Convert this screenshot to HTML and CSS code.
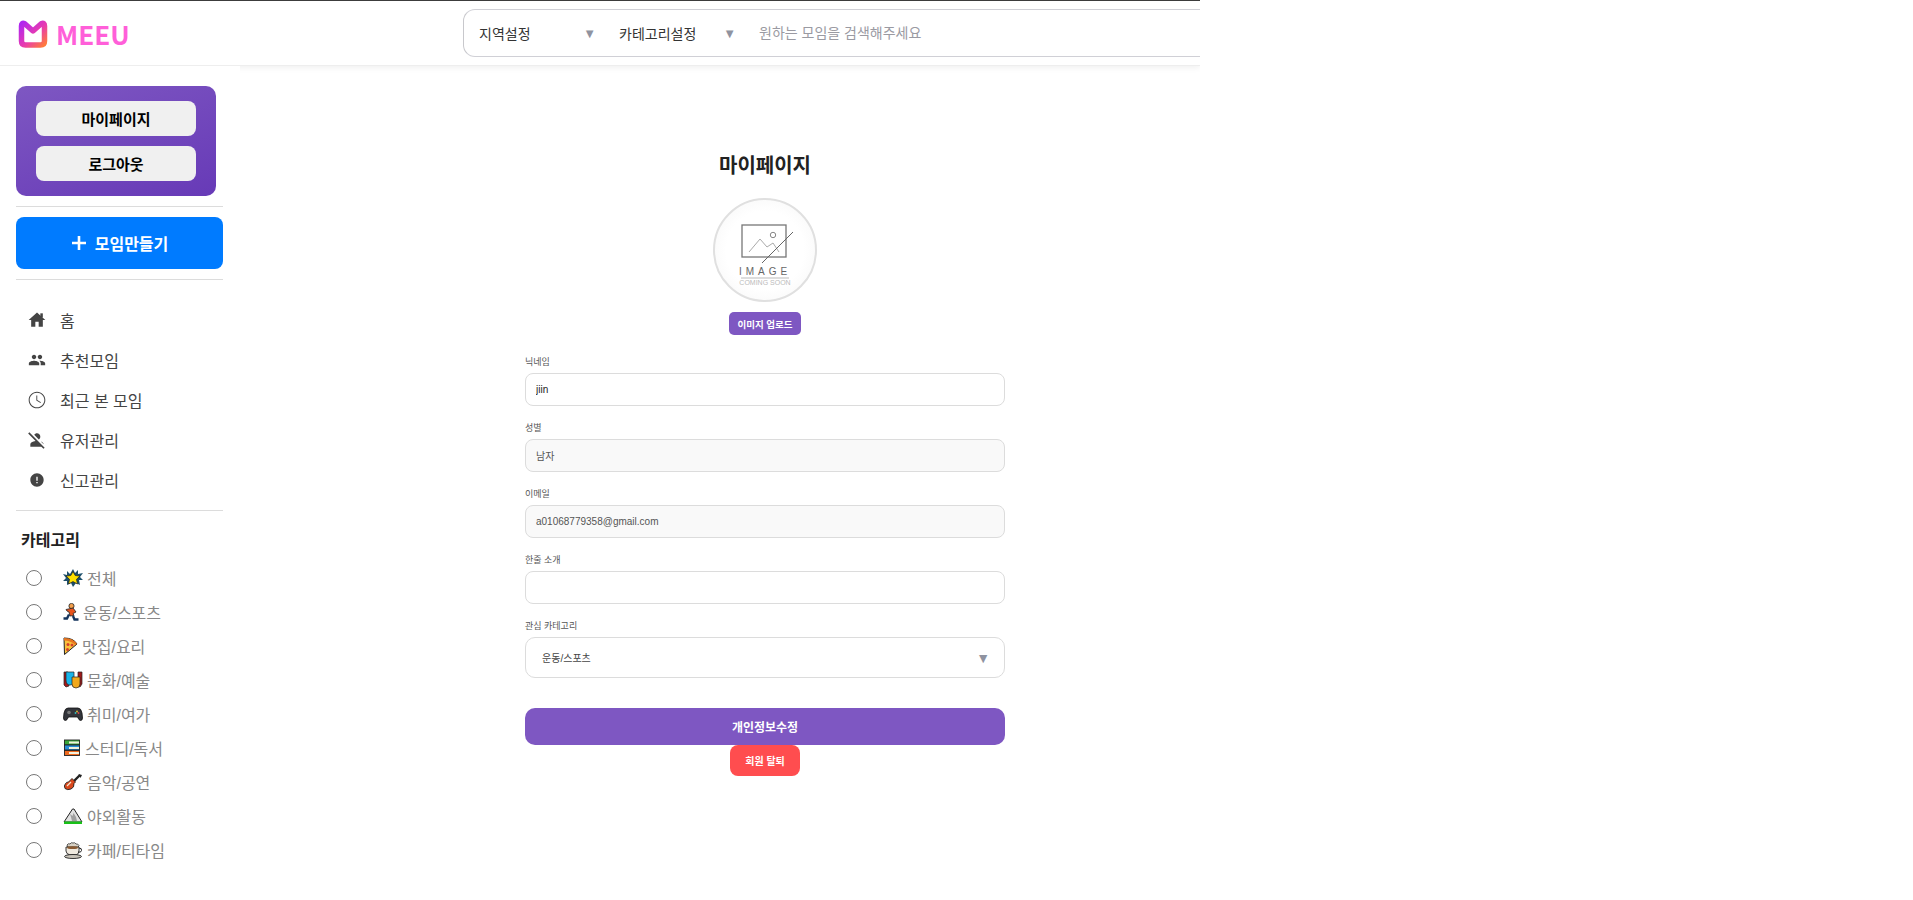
FILE: index.html
```html
<!DOCTYPE html>
<html lang="ko">
<head>
<meta charset="utf-8">
<title>MEEU</title>
<link rel="stylesheet" href="styles.css">
</head>
<body>
<div class="page">
  <header class="topbar">
    <div class="logo">
      <svg class="logo-mark" width="30" height="28" viewBox="0 0 30 28">
        <defs>
          <linearGradient id="lg" x1="0" y1="0" x2="1" y2="1">
            <stop offset="0" stop-color="#b026f0"/><stop offset=".55" stop-color="#e83bb0"/><stop offset="1" stop-color="#ff7a3c"/>
          </linearGradient>
        </defs>
        <path d="M3.500 6V21Q3.500 25 7.500 25H22.500Q26.500 25 26.500 21V6Q26.500 2.500 23.500 3.500L15 11L6.500 3.500Q3.500 2.500 3.500 6Z" fill="none" stroke="url(#lg)" stroke-width="5.500" stroke-linejoin="round"/>
      </svg>
      <span class="logo-text">MEEU</span>
    </div>
    <div class="search">
      <span class="search-select region">지역설정<i class="tri">▼</i></span>
      <span class="search-select cat">카테고리설정<i class="tri">▼</i></span>
      <input class="search-input" type="text" placeholder="원하는 모임을 검색해주세요">
    </div>
  </header>
  <div class="body">
    <aside class="sidebar">
      <div class="profile-card">
        <button class="profile-btn">마이페이지</button>
        <button class="profile-btn">로그아웃</button>
      </div>
      <hr class="rule">
      <button class="create-btn"><svg width="16" height="16" viewBox="0 0 16 16"><path d="M8 1V15M1 8H15" stroke="#fff" stroke-width="2.600"/></svg>모임만들기</button>
      <hr class="rule">
      <nav class="nav">
        <a class="nav-item"><svg width="20" height="20" viewBox="0 0 24 24"><path d="M10 20v-6h4v6h5v-8h3L12 3 2 12h3v8z"/><path d="M16 4h3v5h-3z"/></svg>홈</a>
        <a class="nav-item"><svg width="20" height="20" viewBox="-1.500 -1.500 27 27"><path d="M16 11c1.660 0 2.990-1.340 2.990-3S17.660 5 16 5c-1.660 0-3 1.340-3 3s1.340 3 3 3zm-8 0c1.660 0 2.990-1.340 2.990-3S9.660 5 8 5C6.340 5 5 6.340 5 8s1.340 3 3 3zm0 2c-2.330 0-7 1.170-7 3.500V19h14v-2.500c0-2.330-4.670-3.500-7-3.500zm8 0c-.290 0-.620.020-.970.050 1.160.840 1.970 1.970 1.970 3.450V19h6v-2.500c0-2.330-4.670-3.500-7-3.500z"/></svg>추천모임</a>
        <a class="nav-item"><svg width="20" height="20" viewBox="0 0 24 24"><path d="M11.990 2C6.470 2 2 6.480 2 12s4.470 10 9.990 10C17.520 22 22 17.520 22 12S17.520 2 11.990 2zM12 20.800c-4.860 0-8.800-3.940-8.800-8.800S7.140 3.200 12 3.200s8.800 3.940 8.800 8.800-3.940 8.800-8.800 8.800zm.3-14.300h-1.100v6l5 3 .55-.9-4.450-2.650z"/></svg>최근 본 모임</a>
        <a class="nav-item"><svg width="20" height="20" viewBox="0 0 24 24"><path d="M8.650 5.820C9.360 4.720 10.600 4 12 4c2.210 0 4 1.790 4 4 0 1.400-.720 2.640-1.820 3.350L8.650 5.820zM20 17.170c-.020-1.100-.630-2.110-1.610-2.620-.540-.280-1.130-.540-1.770-.760L20 17.170zM21.190 21.190 2.810 2.810 1.390 4.220l8.890 8.890c-1.810.230-3.390.790-4.670 1.450C4.610 15.070 4 16.100 4 17.220V20h13.170l2.610 2.610 1.410-1.420z"/></svg>유저관리</a>
        <a class="nav-item"><svg width="20" height="20" viewBox="-3 -3 30 30"><path d="M12 2C6.480 2 2 6.480 2 12s4.480 10 10 10 10-4.480 10-10S17.520 2 12 2zm1 15h-2v-2h2v2zm0-4h-2V7h2v6z"/></svg>신고관리</a>
      </nav>
      <hr class="rule">
      <h3 class="cat-title">카테고리</h3>
      <ul class="cat-list">
        <li class="cat-item"><input class="radio" type="radio" name="c"><svg width="20" height="18" viewBox="0 0 20 18"><path d="M10 0l2 4 3-3 0 4 5-1-3 4 3 3-4 0 1 5-4-2-3 4-2-4-4 2 0-4-4 0 3-3-3-4 4 1 0-4 3 3z" fill="#1d4f6b"/><path d="M10 2.500l2.200 4 4.800.6-3.500 3.200 1 4.700-4.500-2.400-4.500 2.400 1-4.700L3 7.100l4.800-.6z" fill="#ffe100" stroke="#222" stroke-width=".7"/></svg>전체</li>
        <li class="cat-item"><input class="radio" type="radio" name="c"><svg width="16" height="18" viewBox="0 0 16 18"><circle cx="8.500" cy="3" r="2.600" fill="#f4a04c" stroke="#222" stroke-width=".8"/><path d="M3 6.500l7-1.500 3 4-3 1.500 1 2-4 .5-1-4-2-1z" fill="#e8541e" stroke="#222" stroke-width=".8"/><path d="M6 11.500L4 15.500H.5M10 13l1.500 3.500h4" fill="none" stroke="#14355e" stroke-width="2.400"/></svg>운동/스포츠</li>
        <li class="cat-item"><input class="radio" type="radio" name="c"><svg width="15" height="18" viewBox="0 0 15 18"><path d="M1 1Q10.500 1 14 7L1.500 17.500z" fill="#f9c23c" stroke="#222" stroke-width="1"/><path d="M1 1Q10.500 1 14 7l-1.800 1Q8 3.500 1 3.500z" fill="#e8741e"/><circle cx="5" cy="7.500" r="1.500" fill="#d6402a"/><circle cx="9" cy="8" r="1.500" fill="#d6402a"/><circle cx="4.500" cy="12.500" r="1.500" fill="#d6402a"/></svg>맛집/요리</li>
        <li class="cat-item"><input class="radio" type="radio" name="c"><svg width="20" height="18" viewBox="0 0 20 18"><path d="M1 1h4l1 14-3 1-2-2zM15 1h4v12l-2 3-2-1z" fill="#a11a1a" stroke="#222" stroke-width=".7"/><path d="M3 1h8v8q0 5-4 5T3 9z" fill="#19b4e8" stroke="#222" stroke-width=".7"/><path d="M9 6h8v7q0 4-4 4t-4-4z" fill="#f0a81c" stroke="#222" stroke-width=".7"/></svg>문화/예술</li>
        <li class="cat-item"><input class="radio" type="radio" name="c"><svg width="20" height="18" viewBox="0 0 20 18"><path d="M5 3h10q3 0 4 5l.5 5q0 2.500-2 2.500-1.500 0-3-3.500H5.500Q4 15.500 2.500 15.500q-2 0-2-2.500L1 8q1-5 4-5z" fill="#33353b" stroke="#111" stroke-width=".8"/><circle cx="6" cy="7.500" r="1.800" fill="#777"/><circle cx="14" cy="6.500" r=".9" fill="#e0c030"/><circle cx="15.500" cy="8" r=".9" fill="#d44"/><circle cx="12.500" cy="8" r=".9" fill="#3bb"/></svg>취미/여가</li>
        <li class="cat-item"><input class="radio" type="radio" name="c"><svg width="18" height="18" viewBox="0 0 18 18"><rect x="1.500" y="1" width="15" height="5" fill="#3aa83a" stroke="#222" stroke-width=".9"/><rect x="1.500" y="6" width="15" height="5" fill="#2a8fd8" stroke="#222" stroke-width=".9"/><rect x="1.500" y="11.500" width="15" height="5" fill="#ee6a1e" stroke="#222" stroke-width=".9"/><path d="M6 2.500h10v2H6zM6 8h10v2H6zM6 13h10v2H6z" fill="#f5f1dc"/></svg>스터디/독서</li>
        <li class="cat-item"><input class="radio" type="radio" name="c"><svg width="20" height="18" viewBox="0 0 20 18"><path d="M10 9l7-7" stroke="#222" stroke-width="2.400"/><path d="M15.500 1l3.500 1-1.500 3z" fill="#222"/><path d="M9 5.500l3.500 3.500-1.500 1.500q.5 4-3 5.500-3.500 1.500-6-.5-1.500-2.500.5-5 1-1.500 3-1.500z" fill="#d9481c" stroke="#222" stroke-width=".9"/><path d="M4 13l4-4" stroke="#f4e6d0" stroke-width="1.300"/></svg>음악/공연</li>
        <li class="cat-item"><input class="radio" type="radio" name="c"><svg width="20" height="18" viewBox="0 0 20 18"><path d="M1 15L9.500 2h1.500L19 15z" fill="#e2e2e2" stroke="#222" stroke-width="1"/><path d="M7 7l2.500 2 1-3 2.500 4 1 4H9l-1-4z" fill="#a0a0a0"/><rect x="1" y="14.500" width="18" height="2.500" fill="#18c018"/></svg>야외활동</li>
        <li class="cat-item"><input class="radio" type="radio" name="c"><svg width="20" height="18" viewBox="0 0 20 18"><path d="M4 4q1-2 3-1 1-2 3-1 2-1 3 1 2-.5 3 1.500l-1 2H5z" fill="#d8d2c6" stroke="#333" stroke-width=".8"/><path d="M3 6h13v4q0 3-3 4H7q-4-1-4-4z" fill="#efe9df" stroke="#222" stroke-width=".9"/><ellipse cx="9.500" cy="6.700" rx="5.500" ry="1.400" fill="#8a5a32"/><path d="M16 7q3 0 2.500 2.500T15 11" fill="none" stroke="#222"/><ellipse cx="10" cy="15.500" rx="8.500" ry="2" fill="#c9c4ba" stroke="#222" stroke-width=".9"/></svg>카페/티타임</li>
      </ul>
    </aside>
    <main class="main">
      <h2 class="title">마이페이지</h2>
      <div class="avatar">
        <svg width="84" height="84" viewBox="0 0 84 84">
          <rect x="19" y="17" width="44" height="32" fill="none" stroke="#777" stroke-width="1.300"/>
          <circle cx="50" cy="27" r="2.700" fill="none" stroke="#888"/>
          <path d="M26 44L37 31l7 8 6-4 6 9" fill="none" stroke="#aaa"/>
          <path d="M39 55L70 24" stroke="#666" stroke-width="1"/>
          <text class="av-big" x="42" y="67" text-anchor="middle">IMAGE</text>
          <path d="M18 70H66" stroke="#aaa" stroke-width=".8"/>
          <text class="av-small" x="42" y="77" text-anchor="middle">COMING SOON</text>
        </svg>
      </div>
      <button class="upload-btn">이미지 업로드</button>
      <form class="form">
        <label class="field"><span class="label">닉네임</span><input class="input" type="text" value="jiin"></label>
        <label class="field"><span class="label">성별</span><input class="input locked" type="text" value="남자" readonly></label>
        <label class="field"><span class="label">이메일</span><input class="input locked" type="text" value="a01068779358@gmail.com" readonly></label>
        <label class="field"><span class="label">한줄 소개</span><input class="input" type="text"></label>
        <label class="field"><span class="label">관심 카테고리</span><span class="select">운동/스포츠<i class="select-tri">▼</i></span></label>
        <button class="submit-btn" type="button">개인정보수정</button>
      </form>
      <button class="delete-btn">회원 탈퇴</button>
    </main>
  </div>
</div>
</body>
</html>
```
FILE: styles.css
```css
* { box-sizing: border-box; }
html, body { margin: 0; padding: 0; background: #fff; }
body { font-family: "Noto Sans CJK KR", "Noto Sans", sans-serif; color: #333; }
button { font-family: inherit; cursor: pointer; border: 0; }

.page { width: 1200px; height: 900px; overflow: hidden; border-top: 1px solid #3c3c3c; }

.topbar { height: 65px; display: flex; align-items: flex-start; border-bottom: 1px solid #eee; box-shadow: 0 2px 6px rgba(0,0,0,.06); position: relative; }
.logo { flex: none; width: 463px; height: 64px; display: flex; align-items: center; gap: 8px; padding: 1px 0 0 18px; }
.logo-mark { display: block; }
.logo-text { font-size: 26px; font-weight: 700; line-height: 1; color: #ff5fd9; }

.search { flex: none; width: 800px; height: 48px; margin-top: 8px; display: flex; align-items: center; border: 1px solid #d0d0d6; border-left-color: #c8c8cc; border-radius: 12px; font-size: 14px; color: #333; font-family: "Liberation Sans", "Noto Sans CJK KR", sans-serif; }
.search-select { display: flex; align-items: center; justify-content: space-between; flex: none; }
.region { width: 132px; padding-left: 15px; margin-right: 23px; }
.cat { width: 117px; margin-right: 23px; }
.tri { font-style: normal; font-size: 13px; color: #8f93a0; }
.search-input { flex: 1; border: 0; outline: 0; font: inherit; padding: 0; background: none; }
.search-input::placeholder { color: #9a9aa2; opacity: 1; }

.body { display: flex; }
.sidebar { width: 240px; flex: none; padding: 20px 17px 0 16px; background: #fff; position: relative; }
.rule { border: 0; border-top: 1px solid #dcdcdc; margin: 10px 0; }
.profile-card { width: 200px; height: 110px; border-radius: 10px; background: linear-gradient(160deg, #7e57c2, #673ab7); display: flex; flex-direction: column; align-items: center; justify-content: center; gap: 10px; }
.profile-btn { width: 160px; height: 35px; border-radius: 8px; background: #f0f0f0; color: #000; font-size: 15px; font-weight: 700; padding: 0; }
.create-btn { width: 100%; height: 52px; border-radius: 8px; background: #007bff; color: #fff; font-size: 16px; font-weight: 700; display: flex; align-items: center; justify-content: center; gap: 8px; padding: 0; }

.nav { display: flex; flex-direction: column; padding-top: 10px; margin-bottom: 0; }
.nav-item { height: 40px; display: flex; align-items: center; gap: 13px; padding-left: 11px; font-family: "Liberation Sans", "Noto Sans CJK KR", sans-serif; font-size: 16px; color: #444; }
.nav-item svg { fill: #444; flex: none; }

.cat-title { margin: 0; padding: 6px 5px 0; font-size: 16px; font-weight: 700; line-height: 24px; color: #222; }
.cat-list { list-style: none; margin: 10px 0 0; padding: 0 0 0 10px; }
.cat-item { height: 34px; display: flex; align-items: center; gap: 4px; font-family: "Liberation Sans", "Noto Sans CJK KR", sans-serif; font-size: 16px; color: #888; }
.cat-item svg { flex: none; }
.radio { appearance: none; width: 16px; height: 16px; margin: 0 17px 0 0; border: 1px solid #777; border-radius: 50%; background: #fff; flex: none; }

.main { flex: 0 0 480px; margin-left: 285px; display: flex; flex-direction: column; align-items: center; }
.title { margin: 84px 0 0; font-size: 20px; font-weight: 700; line-height: 29px; color: #222; }
.avatar { width: 104px; height: 104px; margin-top: 19px; border-radius: 50%; border: 2px solid #e0e0e0; background: radial-gradient(circle, #fff 55%, #f4f4f4); display: flex; align-items: center; justify-content: center; }
.av-big { font-family: "Liberation Sans", sans-serif; font-size: 10px; letter-spacing: 4px; fill: #666; }
.av-small { font-family: "Liberation Sans", sans-serif; font-size: 7px; fill: #bbb; }
.upload-btn { width: 72px; height: 23px; margin-top: 10px; padding: 0; border-radius: 5px; background: #7e57c2; color: #fff; font-size: 9.500px; font-weight: 700; }

.form { width: 100%; display: flex; flex-direction: column; margin-top: 20px; }
.field { display: block; height: 66px; }
.label { display: block; height: 18px; font-family: "Liberation Sans", "Noto Sans CJK KR", sans-serif; font-size: 9px; line-height: 14px; color: #555; }
.input { display: block; width: 100%; height: 33px; border: 1px solid #dcdcdc; border-radius: 8px; outline: 0; padding: 0 10px; font-family: "Liberation Sans", "Noto Sans CJK KR", sans-serif; font-size: 10px; color: #222; background: #fff; }
.locked { background: #f9f9f9; color: #555; }
.select { position: relative; display: flex; align-items: center; height: 41px; padding: 0 16px; border: 1px solid #dcdcdc; border-radius: 10px; font-family: "Liberation Sans", "Noto Sans CJK KR", sans-serif; font-size: 10px; color: #444; }
.select-tri { position: absolute; right: 14px; top: 12px; font-style: normal; font-size: 14px; line-height: 16px; color: #8f93a0; }
.submit-btn { height: 37px; margin-top: 23px; border-radius: 10px; background: #7e57c2; color: #fff; font-size: 12px; font-weight: 700; padding: 0; }
.delete-btn { width: 70px; height: 31px; padding: 0; border-radius: 8px; background: #ff4d4f; color: #fff; font-size: 10px; font-weight: 700; }
```
